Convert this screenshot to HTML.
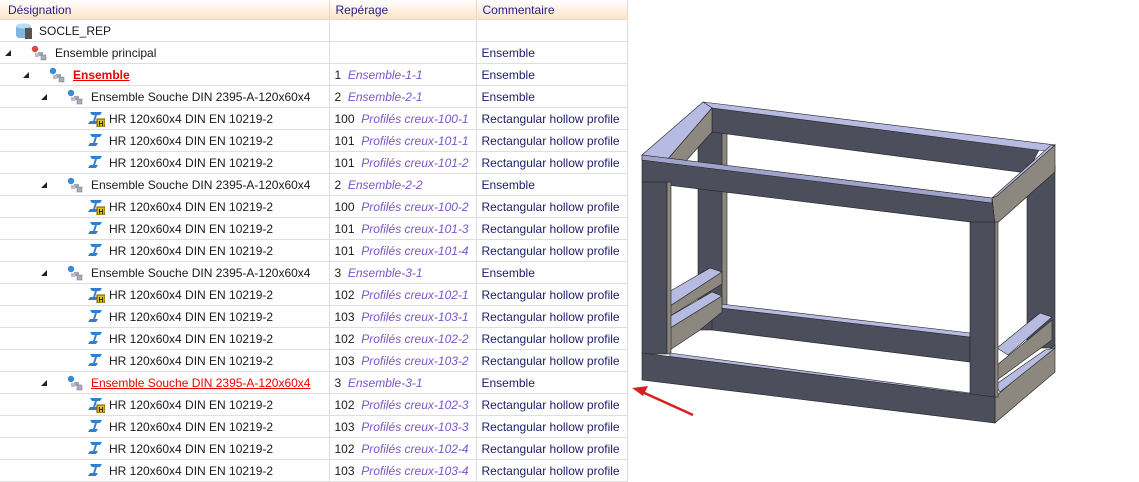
<!DOCTYPE html>
<html><head><meta charset="utf-8"><style>
body{margin:0;width:1139px;height:480px;background:#fff;overflow:hidden;position:relative;font-family:"Segoe UI","Liberation Sans",sans-serif;font-size:12px;color:#1a1a1a}
table{position:absolute;left:0;top:0;border-collapse:collapse;table-layout:fixed;width:627px}
td,th{height:21px;border-bottom:1px solid #dedede;border-right:1px solid #dedede;padding:0;white-space:nowrap;overflow:hidden}
th{height:19px;text-align:left;font-weight:normal;color:#23238a;background:linear-gradient(#fff,#fde3c6);padding-left:6px;border-right:1px solid #e8d8c8}
th:first-child{padding-left:8px}
td.c2,td.c3{padding-left:5px}
.v{height:21px;line-height:23px;overflow:hidden}
.n{position:relative;height:21px}
.n span{position:absolute;top:4px}
.tri{position:absolute;top:8px;width:0;height:0;border-left:6px solid transparent;border-bottom:6px solid #222}
.ic{position:absolute;top:3px}
.r{color:#e00;text-decoration:underline}
i{color:#7a55c9}
.c3{color:#1c1c6a}
</style></head><body>
<table>
<colgroup><col style="width:329px"><col style="width:147px"><col style="width:151px"></colgroup>
<tr><th>Désignation</th><th>Repérage</th><th>Commentaire</th></tr>
<tr><td><div class="n"><svg class="ic" style="left:15px;top:2px" width="19" height="18"><rect x="1" y="3" width="15" height="13" rx="3" fill="#7fb7e0"/><ellipse cx="8.5" cy="4" rx="7.5" ry="2.5" fill="#b9dcf4"/><rect x="10" y="6" width="7" height="11" fill="#555"/></svg><span style="left:39px">SOCLE_REP</span></div></td><td></td><td class="c3"></td></tr>
</table>
<script>
var hr='<svg class="ic" style="left:LEFTpx;top:2px" width="17" height="17"><path d="M2 2h12l-2 3h-3l-2 6h3l-2 3H0l2-3h3l2-6H4z" fill="#2f7fcf"/>HB</svg>';
var badge='<rect x="9" y="9" width="8" height="8" fill="#e8c020" stroke="#6a5200" stroke-width="1"/><text x="10.5" y="16" font-size="7" font-family="Liberation Sans" font-weight="bold" fill="#222">H</text>';
function asm(l,c){return '<svg class="ic" style="left:'+l+'px;top:3px" width="16" height="16"><circle cx="4" cy="4" r="3.2" fill="'+c+'"/><rect x="7" y="7" width="5" height="4" fill="#9aa"/><rect x="10" y="10" width="5" height="5" fill="#aab" stroke="#778" stroke-width=".5"/><rect x="4" y="8" width="4" height="4" fill="#bbc"/></svg>';}
var R=[
[1,'Ensemble principal','','','Ensemble','#d44'],
[2,'<span class="r" style="font-weight:bold;position:static">Ensemble</span>','1','Ensemble-1-1','Ensemble','#3a8ad8'],
[3,'Ensemble Souche DIN 2395-A-120x60x4','2','Ensemble-2-1','Ensemble','#3a8ad8'],
[4,'HR 120x60x4 DIN EN 10219-2','100','Profilés creux-100-1','Rectangular hollow profile','H'],
[4,'HR 120x60x4 DIN EN 10219-2','101','Profilés creux-101-1','Rectangular hollow profile',''],
[4,'HR 120x60x4 DIN EN 10219-2','101','Profilés creux-101-2','Rectangular hollow profile',''],
[3,'Ensemble Souche DIN 2395-A-120x60x4','2','Ensemble-2-2','Ensemble','#3a8ad8'],
[4,'HR 120x60x4 DIN EN 10219-2','100','Profilés creux-100-2','Rectangular hollow profile','H'],
[4,'HR 120x60x4 DIN EN 10219-2','101','Profilés creux-101-3','Rectangular hollow profile',''],
[4,'HR 120x60x4 DIN EN 10219-2','101','Profilés creux-101-4','Rectangular hollow profile',''],
[3,'Ensemble Souche DIN 2395-A-120x60x4','3','Ensemble-3-1','Ensemble','#3a8ad8'],
[4,'HR 120x60x4 DIN EN 10219-2','102','Profilés creux-102-1','Rectangular hollow profile','H'],
[4,'HR 120x60x4 DIN EN 10219-2','103','Profilés creux-103-1','Rectangular hollow profile',''],
[4,'HR 120x60x4 DIN EN 10219-2','102','Profilés creux-102-2','Rectangular hollow profile',''],
[4,'HR 120x60x4 DIN EN 10219-2','103','Profilés creux-103-2','Rectangular hollow profile',''],
[3,'<span class="r" style="position:static">Ensemble Souche DIN 2395-A-120x60x4</span>','3','Ensemble-3-1','Ensemble','#3a8ad8'],
[4,'HR 120x60x4 DIN EN 10219-2','102','Profilés creux-102-3','Rectangular hollow profile','H'],
[4,'HR 120x60x4 DIN EN 10219-2','103','Profilés creux-103-3','Rectangular hollow profile',''],
[4,'HR 120x60x4 DIN EN 10219-2','102','Profilés creux-102-4','Rectangular hollow profile',''],
[4,'HR 120x60x4 DIN EN 10219-2','103','Profilés creux-103-4','Rectangular hollow profile','']];
var t=document.querySelector('table'),h='';
R.forEach(function(r){var lv=r[0],x=18*lv,c='';
 if(lv<4){c+='<div class="tri" style="left:'+(x-13)+'px"></div>'+asm(x+13,r[5])+'<span style="left:'+(x+37)+'px">'+r[1]+'</span>';}
 else{c+=hr.replace('LEFT',88).replace('HB',r[5]=='H'?badge:'')+'<span style="left:109px">'+r[1]+'</span>';}
 h+='<tr><td><div class="n">'+c+'</div></td><td class="c2"><div class="v">'+(r[2]?r[2]+'&nbsp; <i>'+r[3]+'</i>':'')+'</div></td><td class="c3"><div class="v">'+r[4]+'</div></td></tr>';});
t.insertAdjacentHTML('beforeend',h);
</script>
<svg style="position:absolute;left:0;top:0" width="1139" height="480">
<g stroke="#222" stroke-width=".6">
<rect x="698" y="132" width="26" height="198" fill="#4d4e5c"/><rect x="722" y="132" width="5" height="198" fill="#8c877f"/>
<polygon points="712,305 970,335 970,362 712,330" fill="#4d4e5c"/>
<polygon points="712,303 970,333 970,337 712,307" fill="#b7bbe2"/>
<polygon points="712,108 1040,148 1027,173 712,132" fill="#4d4e5c"/>
<polygon points="703,102 1055,145 1045,151 712,108" fill="#b7bbe2"/>
<rect x="1027" y="165" width="28" height="183" fill="#4d4e5c"/>
<polygon points="667,293 710,268 722,272 667,308" fill="#b7bbe2"/>
<polygon points="667,308 722,272 722,284 667,318" fill="#8c877f"/>
<polygon points="667,318 712,292 722,296 667,330" fill="#b7bbe2"/>
<polygon points="667,330 722,296 722,312 700,330 667,352" fill="#8c877f"/>
<polygon points="642,155 703,102 712,108 667,160" fill="#b7bbe2"/>
<polygon points="667,160 712,108 712,132 667,182" fill="#8c877f"/>
<polygon points="997,348 1040,313 1052,317 1008,355" fill="#b7bbe2"/>
<polygon points="997,365 1052,320 1052,340 997,380" fill="#8c877f"/>
<polygon points="995,397 1055,345 1055,372 995,423" fill="#8c877f"/>
<polygon points="995,385 1045,350 1055,348 1000,392" fill="#b7bbe2"/>
<polygon points="992,198 1055,145 1055,172 995,225" fill="#8c877f"/>
<polygon points="992,198 1050,146 1055,145 997,196" fill="#b7bbe2"/>
<polygon points="642,155 992,198 995,225 642,182" fill="#4d4e5c"/>
<polygon points="642,155 992,198 992,203 642,160" fill="#9fa3cc"/>
<rect x="642" y="182" width="25" height="172" fill="#4d4e5c"/><rect x="667" y="182" width="4" height="172" fill="#8c877f"/>
<rect x="970" y="222" width="25" height="175" fill="#4d4e5c"/><rect x="995" y="222" width="3" height="175" fill="#8c877f"/>
<polygon points="670,353 970,393 970,397 670,357" fill="#b7bbe2"/>
<polygon points="642,353 995,397 995,423 642,380" fill="#4d4e5c"/>
</g>
<line x1="693" y1="415" x2="640" y2="391" stroke="#d82020" stroke-width="2.5"/>
<polygon points="632,388 648,386 643,396" fill="#d82020"/>
</svg>
</body></html>
